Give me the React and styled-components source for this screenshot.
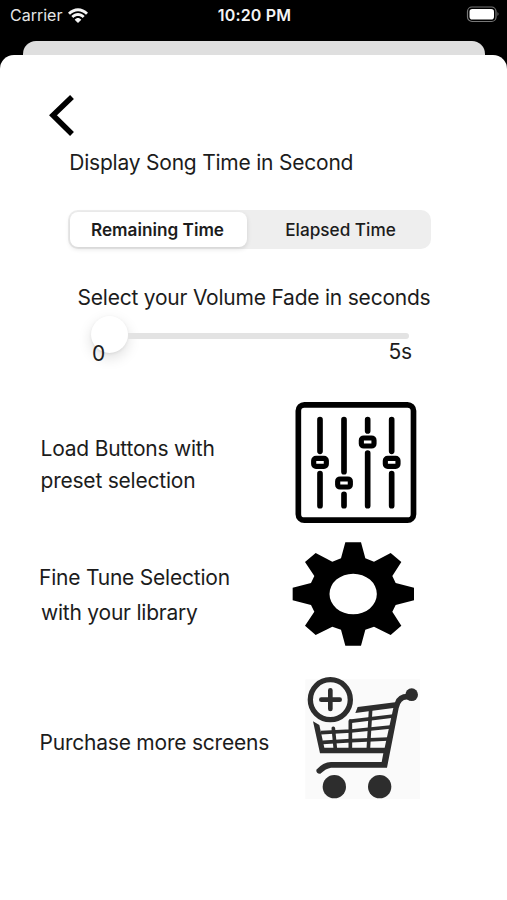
import styled, { createGlobalStyle } from 'styled-components'

// styles
const GlobalStyle = createGlobalStyle`
  * {
    box-sizing: border-box;
  }
  body {
    margin: 0;
    background: #000;
    font-family: Inter, 'Liberation Sans', sans-serif;
  }
`

const Screen = styled.div`
  width: 507px;
  height: 900px;
  display: flex;
  flex-direction: column;
  overflow: hidden;
  background: #000;
`

const StatusBar = styled.div`
  height: 41px;
  flex: none;
  display: grid;
  grid-template-columns: 1fr auto 1fr;
  align-items: start;
  padding: 5px 8px 0 10px;
  color: #e6e6e6;
  font-size: 16px;
  line-height: 20px;
`

const Carrier = styled.div`
  display: flex;
  align-items: center;
  gap: 6px;
`

const Clock = styled.div`
  color: #f4f4f4;
  font-weight: 600;
  letter-spacing: 0.2px;
`

const BatteryIcon = styled.svg`
  justify-self: end;
`

const BackCard = styled.div`
  height: 14px;
  flex: none;
  margin: 0 22px 0 23px;
  background: #dfdfdf;
  border-radius: 13px 13px 0 0;
`

const Sheet = styled.div`
  flex: 1;
  display: flex;
  flex-direction: column;
  align-items: flex-start;
  padding-top: 39px;
  background: #fff;
  border-radius: 14px 14px 0 0;
  color: #1c1c1c;
`

const BackButton = styled.button`
  display: flex;
  margin: 0 0 12px 48px;
  padding: 0;
  border: 0;
  background: none;
`

const Text = styled.div`
  height: ${p => p.$line || 28}px;
  padding-top: 1px;
  font-size: 21px;
  line-height: ${p => p.$line || 28}px;
  letter-spacing: -0.22px;
  margin-left: ${p => p.$indent || 0}px;
  white-space: nowrap;
`

const Segments = styled.div`
  width: 363px;
  height: 39px;
  margin: 34px 0 34px 68px;
  padding: 2px;
  display: grid;
  grid-template-columns: 177px 1fr;
  background: #eee;
  border-radius: 10px;
`

const Segment = styled.div`
  display: flex;
  align-items: center;
  justify-content: center;
  padding: 0 ${p => (p.$active ? 2 : 0)}px 1px ${p => (p.$active ? 0 : 5)}px;
  border-radius: 8px;
  font-size: 17.2px;
  font-weight: ${p => (p.$active ? 600 : 500)};
  background: ${p => (p.$active ? '#fff' : 'none')};
  box-shadow: ${p => (p.$active ? '0 2px 5px rgba(0, 0, 0, 0.12)' : 'none')};
`

const Slider = styled.div`
  width: 318px;
  height: 37px;
  margin: 5px 0 0 91px;
  display: flex;
  align-items: center;
`

const Thumb = styled.div`
  width: 37px;
  height: 37px;
  flex: none;
  border-radius: 50%;
  background: #fff;
  box-shadow: 0 5px 14px rgba(0, 0, 0, 0.13), 0 1px 3px rgba(0, 0, 0, 0.07);
`

const Track = styled.div`
  flex: 1;
  height: 6px;
  margin-top: 2px;
  background: #e3e3e3;
  border-radius: 0 3px 3px 0;
`

const Range = styled.div`
  position: relative;
  width: 320px;
  margin: -16px 0 0 92px;
  display: flex;
  justify-content: space-between;
`

const Option = styled.div`
  width: 507px;
  height: ${p => p.$height}px;
  margin-top: ${p => p.$top}px;
  padding-top: ${p => p.$pad}px;
  display: grid;
  grid-template-columns: 292px 1fr;
`

const OptionIcon = styled.svg`
  margin-top: ${p => -p.$lift}px;
`

const WifiIcon = () => (
  <svg width='20' height='15' viewBox='0 0 60 45' fill='#f4f4f4'>
    <path d='M0 14C17-4 43-4 60 14L54 20C40 6 20 6 6 20Z' />
    <path d='M10 24C22 12 38 12 50 24L44 30C35 22 25 22 16 30Z' />
    <path d='M20 35C26 28 34 28 40 35L30 45Z' />
  </svg>
)

const MixerIcon = () => (
  <OptionIcon width='128' height='121' viewBox='21 36 384 363' $lift={30} fill='none' stroke='#000' strokeLinecap='round'>
    <rect x='40' y='44.500' width='345.500' height='346' rx='18' strokeWidth='17' />
    <path
      strokeWidth='17'
      d='M105 89V184M105 251V347M177 89V245M177 313V347M248 89V123M248 189V347M320 89V184M320 251V347'
    />
    {[[105, 217], [177, 279], [248, 156], [320, 217]].map(([x, y]) => (
      <rect key={x} x={x - 19} y={y - 12} width='38' height='24' rx='7' strokeWidth='15.500' />
    ))}
  </OptionIcon>
)

const GearIcon = () => (
  <OptionIcon width='128' height='104' viewBox='21 37 384 312' $lift={17}>
    <path
      fillRule='evenodd'
      d='M181 38H228L241 86L267 96L317 70L349 97L322 139L332 160L387 174V212L332 226L322 246L349 288L317 316L267 291L241 300L228 348H181L168 300L142 291L92 316L60 288L88 246L78 226L23 212V174L78 160L88 139L60 97L92 70L142 96L168 86ZM204.500 132A71 61 0 1 0 204.500 254A71 61 0 1 0 204.500 132Z'
    />
  </OptionIcon>
)

const CartIcon = () => (
  <OptionIcon width='134' height='125' viewBox='-9 30 402 375' $lift={53} fill='none' stroke='#2d2d2d'>
    <rect x='31' y='43' width='344' height='359' fill='#fafafa' stroke='none' />
    <circle cx='106' cy='104' r='68' fill='#fafafa' stroke='none' />
    <circle cx='106' cy='104' r='60' strokeWidth='16' />
    <path d='M106 76V132M79 104H134' strokeWidth='14' strokeLinecap='round' />
    <path d='M181 144L188 126L300 112Q308 86 338 86V104Q317 102 311 130L276 308H108Q93 310 76 326Q63 327 64 314Q84 292 108 291H260L265 265H75L54 169L73 180L88 248H269L295 129Z' fill='#2d2d2d' stroke='none' />
    <circle cx='350' cy='89' r='19' fill='#2d2d2d' stroke='none' />
    <path d='M78 203L168 198L286 186M83 232L168 227L280 222' strokeWidth='11' />
    <path d='M163 169L295 153' strokeWidth='11' />
    <path d='M166 168V252M227 132L220 252M115 190L121 252' strokeWidth='11' strokeLinecap='round' />
    <circle cx='118' cy='365' r='35' fill='#2d2d2d' stroke='none' />
    <circle cx='254' cy='365' r='35' fill='#2d2d2d' stroke='none' />
  </OptionIcon>
)

function App() {
  return (
    <>
      <GlobalStyle />
      <Screen>
        <StatusBar>
          <Carrier>
            Carrier
            <WifiIcon />
          </Carrier>
          <Clock>10:20 PM</Clock>
          <BatteryIcon width='33' height='18' viewBox='0 0 33 18'>
            <rect x='1.500' y='2' width='28.500' height='14.500' rx='4.500' fill='none' stroke='#777' strokeWidth='1.200' />
            <rect x='3.500' y='4' width='24.500' height='10.500' rx='2.800' fill='#fff' />
            <path d='M31.500 7Q33.500 9 31.500 11Z' fill='#777' />
          </BatteryIcon>
        </StatusBar>
        <BackCard />
        <Sheet>
          <BackButton aria-label='Back'>
            <svg width='28' height='42' viewBox='0 0 28 42' fill='none' stroke='#000' strokeWidth='5.500'>
              <path d='M24 3L5 21.300L24 40' />
            </svg>
          </BackButton>
          <Text $indent={69.3}>Display Song Time in Second</Text>
          <Segments>
            <Segment $active>Remaining Time</Segment>
            <Segment>Elapsed Time</Segment>
          </Segments>
          <Text $indent={77.5}>Select your Volume Fade in seconds</Text>
          <Slider>
            <Thumb />
            <Track />
          </Slider>
          <Range>
            <Text $line={32}>0</Text>
            <Text>5s</Text>
          </Range>
          <Option $height={121} $top={33} $pad={30}>
            <div>
              <Text $line={32} $indent={40.5}>Load Buttons with</Text>
              <Text $line={32} $indent={40.5}>preset selection</Text>
            </div>
            <MixerIcon />
          </Option>
          <Option $height={104} $top={19} $pad={17}>
            <div>
              <Text $line={35} $indent={39}>Fine Tune Selection</Text>
              <Text $line={35} $indent={41}>with your library</Text>
            </div>
            <GearIcon />
          </Option>
          <Option $height={125} $top={28} $pad={54}>
            <Text $indent={39.5}>Purchase more screens</Text>
            <CartIcon />
          </Option>
        </Sheet>
      </Screen>
    </>
  )
}

export default App
